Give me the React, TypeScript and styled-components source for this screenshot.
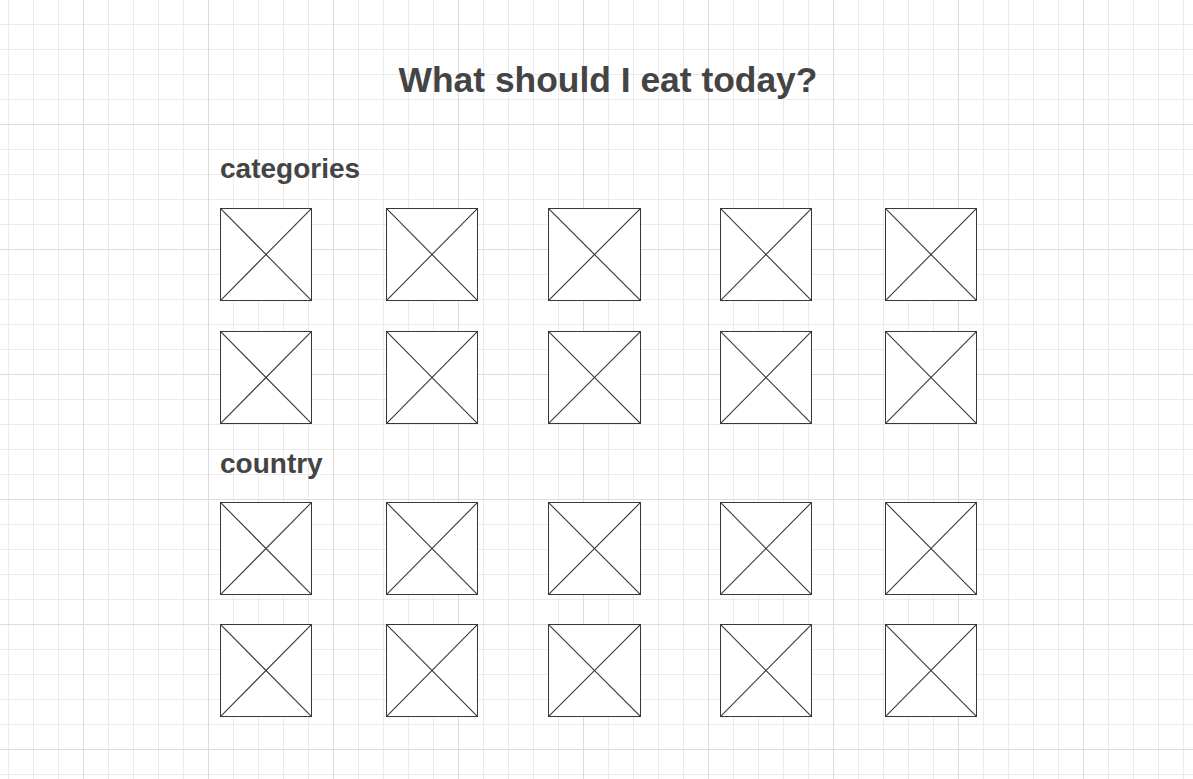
import React from "react";
import styled, { createGlobalStyle } from "styled-components";

const GlobalStyle = createGlobalStyle`
  html, body {
    margin: 0;
    padding: 0;
    min-height: 100%;
  }
  html {
    background-color: #ffffff;
    background-image:
      linear-gradient(to right, #dcdcdc 0 1px, transparent 1px),
      linear-gradient(to bottom, #dcdcdc 0 1px, transparent 1px),
      linear-gradient(to right, #ebebeb 0 1px, transparent 1px),
      linear-gradient(to bottom, #ebebeb 0 1px, transparent 1px);
    background-size: 125px 100%, 100% 125px, 25px 100%, 100% 25px;
    background-position: 83px 0, 0 124px, 8px 0, 0 24px;
  }
  body {
    font-family: "Liberation Sans", Arial, sans-serif;
    color: #444444;
  }
`;

const Page = styled.div`
  min-height: 779px;
  box-sizing: border-box;
  padding: 63px 0 0 220px;
  display: flex;
  flex-direction: column;
`;

const Title = styled.h1`
  margin: 0;
  width: 776px;
  text-align: center;
  font-size: 35.4px;
  line-height: 35px;
  font-weight: 700;
  color: #444444;
`;

const Section = styled.section<{ $top: number; $gap: number }>`
  margin-top: ${(p) => p.$top}px;
  display: flex;
  flex-direction: column;
  gap: ${(p) => p.$gap}px;
`;

const Label = styled.h2`
  margin: 0;
  font-size: 28px;
  line-height: 28px;
  font-weight: 700;
  color: #444444;
`;

const Grid = styled.div<{ $rowGap: number }>`
  display: grid;
  grid-template-columns: 166px 162px 172px 165px 92px;
  row-gap: ${(p) => p.$rowGap}px;
`;

const Placeholder = styled.div<{ $w: number }>`
  width: ${(p) => p.$w}px;
  height: 93px;
  box-sizing: border-box;
  border: 1px solid #383838;
  background: #ffffff;
`;

const Cross = styled.svg`
  display: block;
  width: 100%;
  height: 100%;
`;

const ImagePlaceholder = ({ width }: { width: number }) => (
  <Placeholder $w={width}>
    <Cross viewBox="0 0 90 91" preserveAspectRatio="none">
      <line x1="0" y1="0" x2="90" y2="91" stroke="#383838" strokeWidth="1.1" />
      <line x1="90" y1="0" x2="0" y2="91" stroke="#383838" strokeWidth="1.1" />
    </Cross>
  </Placeholder>
);

const widths = [92, 92, 93, 92, 92];

const Tiles = ({ rowGap }: { rowGap: number }) => (
  <Grid $rowGap={rowGap}>
    {Array.from({ length: 10 }).map((_, i) => (
      <ImagePlaceholder key={i} width={widths[i % 5]} />
    ))}
  </Grid>
);

export default function App() {
  return (
    <>
      <GlobalStyle />
      <Page>
        <Title>What should I eat today?</Title>
        <Section $top={57} $gap={25}>
          <Label>categories</Label>
          <Tiles rowGap={30} />
        </Section>
        <Section $top={26} $gap={24}>
          <Label>country</Label>
          <Tiles rowGap={29} />
        </Section>
      </Page>
    </>
  );
}
